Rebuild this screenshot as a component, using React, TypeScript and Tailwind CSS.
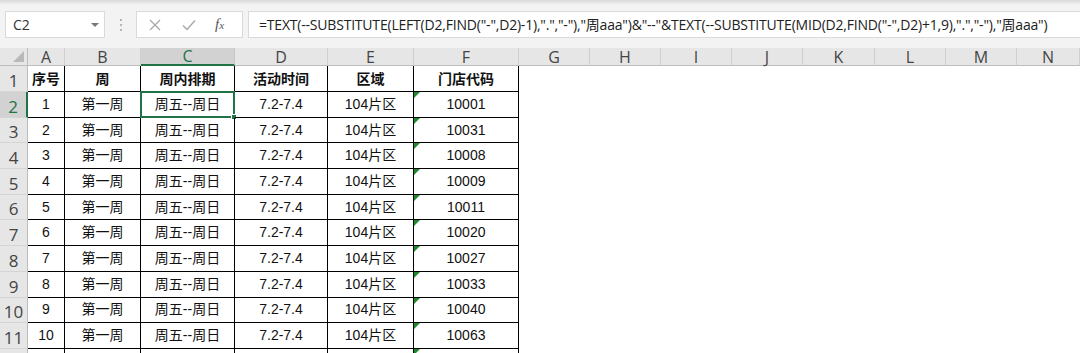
import React from "react";

const COLS = [
  { l: "A", w: 37 },
  { l: "B", w: 76 },
  { l: "C", w: 94 },
  { l: "D", w: 93 },
  { l: "E", w: 86 },
  { l: "F", w: 105 },
  { l: "G", w: 71 },
  { l: "H", w: 71 },
  { l: "I", w: 71 },
  { l: "J", w: 71 },
  { l: "K", w: 72 },
  { l: "L", w: 71 },
  { l: "M", w: 71 },
  { l: "N", w: 63 },
];

const CODES = ["10001", "10031", "10008", "10009", "10011", "10020", "10027", "10033", "10040", "10063"];
const HEAD = ["序号", "周", "周内排期", "活动时间", "区域", "门店代码"];

const GRID = "grid grid-cols-[28px_37px_76px_94px_93px_86px_105px_71px_71px_71px_71px_72px_71px_71px_63px]";
const FONT = "font-['Liberation_Sans','Noto_Sans_CJK_SC',sans-serif]";
const UI = "font-['Open_Sans','Noto_Sans_CJK_SC',sans-serif]";

function Tri() {
  return (
    <div className="absolute left-0 top-0 w-0 h-0 border-t-[6px] border-t-[#1f8a2a] border-r-[6px] border-r-transparent" />
  );
}

function Row({ n, cells, head, h, sel, label = true }: { n: number; cells: string[]; head?: boolean; h: string; sel?: boolean; label?: boolean }) {
  return (
    <div className={`${GRID} ${h}`}>
      <div
        className={`${UI} flex items-end justify-center text-[17px] leading-[20px] border-b border-[#d4d4d4] ${
          sel ? "bg-[#d2d2d2] text-[#217346] border-r-2 border-r-[#217346]" : "bg-[#e6e6e6] text-[#444] border-r border-r-[#bdbdbd]"
        }`}
      >
        {label ? n : ""}
      </div>
      {cells.map((c, i) => (
        <div
          key={i}
          className={`relative flex items-center justify-center border-b border-r border-black text-[14px] text-[#111] ${
            head ? "font-bold font-['Noto_Sans_CJK_SC',sans-serif]" : FONT
          }`}
        >
          {!head && i === 5 && <Tri />}
          {c}
          {sel && i === 2 && (
            <div className="absolute -left-[1px] -top-[1px] -right-[1px] -bottom-[1px] border-2 border-[#217346]">
              <div className="absolute -right-[4px] -bottom-[4px] w-[6px] h-[6px] bg-[#217346] border border-white" />
            </div>
          )}
        </div>
      ))}
      {Array.from({ length: 8 }).map((_, i) => (
        <div key={"e" + i} />
      ))}
    </div>
  );
}

export default function App() {
  const formula =
    '=TEXT(--SUBSTITUTE(LEFT(D2,FIND("-",D2)-1),".","-"),"周aaa")&"--"&TEXT(--SUBSTITUTE(MID(D2,FIND("-",D2)+1,9),".","-"),"周aaa")';
  return (
    <div className="w-[1080px] h-[353px] overflow-hidden bg-white">
      {/* formula bar */}
      <div className="h-[48px] bg-[#f3f3f3] bg-gradient-to-b from-[#d9d9d9] via-[#f3f3f3] via-[10%] to-[#f3f3f3] flex items-start pt-[11px] pl-[5px]">
        <div className={`${UI} w-[100px] h-[27px] bg-white border border-[#dadada] flex items-center justify-between pl-[7px] pr-[5px] text-[14px] text-[#333]`}>
          <span>C2</span>
          <div className="w-0 h-0 border-l-[4px] border-r-[4px] border-t-[4px] border-l-transparent border-r-transparent border-t-[#777]" />
        </div>
        <div className="w-[31px] h-[27px] flex flex-col items-center justify-center gap-[3px]">
          <div className="w-[2px] h-[2px] bg-[#b5b5b5]" />
          <div className="w-[2px] h-[2px] bg-[#b5b5b5]" />
          <div className="w-[2px] h-[2px] bg-[#b5b5b5]" />
        </div>
        <div className="w-[107px] h-[27px] bg-white border border-[#dadada] flex items-center">
          <svg width="12" height="12" viewBox="0 0 12 12" className="ml-[12px]">
            <path d="M1 1L11 11M11 1L1 11" stroke="#a8a8a8" strokeWidth="1.3" fill="none" />
          </svg>
          <svg width="14" height="12" viewBox="0 0 14 12" className="ml-[21px]">
            <path d="M1 6.5L5 10.5L13 1.5" stroke="#a8a8a8" strokeWidth="1.4" fill="none" />
          </svg>
          <span className="ml-[19px] font-['Liberation_Serif',serif] italic text-[#555] text-[15px] leading-none">
            f<span className="text-[11px]">x</span>
          </span>
        </div>
        <div className={`${UI} ml-[5px] flex-1 h-[27px] bg-white border border-[#dadada] border-r-0 flex items-center pl-[10px] text-[14px] text-[#222] whitespace-nowrap tracking-[-0.2px]`}>
          {formula}
        </div>
      </div>
      {/* column header */}
      <div className={`${GRID} h-[18px]`}>
        <div className="relative bg-[#e6e6e6] border-r border-b border-[#bdbdbd]">
          <div className="absolute right-[3px] bottom-[3px] w-0 h-0 border-l-[11px] border-l-transparent border-b-[11px] border-b-[#b9b9b9]" />
        </div>
        {COLS.map((c) => (
          <div
            key={c.l}
            className={`${UI} flex items-center justify-center text-[16px] leading-none ${
              c.l === "C"
                ? "bg-[#d2d2d2] text-[#217346] border-b-2 border-b-[#217346] border-r border-r-[#c6c6c6]"
                : "bg-[#e6e6e6] text-[#444] border-b border-b-[#bdbdbd] border-r border-r-[#cfcfcf]"
            }`}
          >
            {c.l}
          </div>
        ))}
      </div>
      <Row n={1} cells={HEAD} head h="h-[26px]" />
      {CODES.map((code, i) => (
        <Row
          key={i}
          n={i + 2}
          sel={i === 0}
          h="h-[25.7px]"
          cells={[String(i + 1), "第一周", "周五--周日", "7.2-7.4", "104片区", code]}
        />
      ))}
      <Row n={12} h="h-[26px]" label={false} cells={["", "", "", "", "", ""]} />
    </div>
  );
}
